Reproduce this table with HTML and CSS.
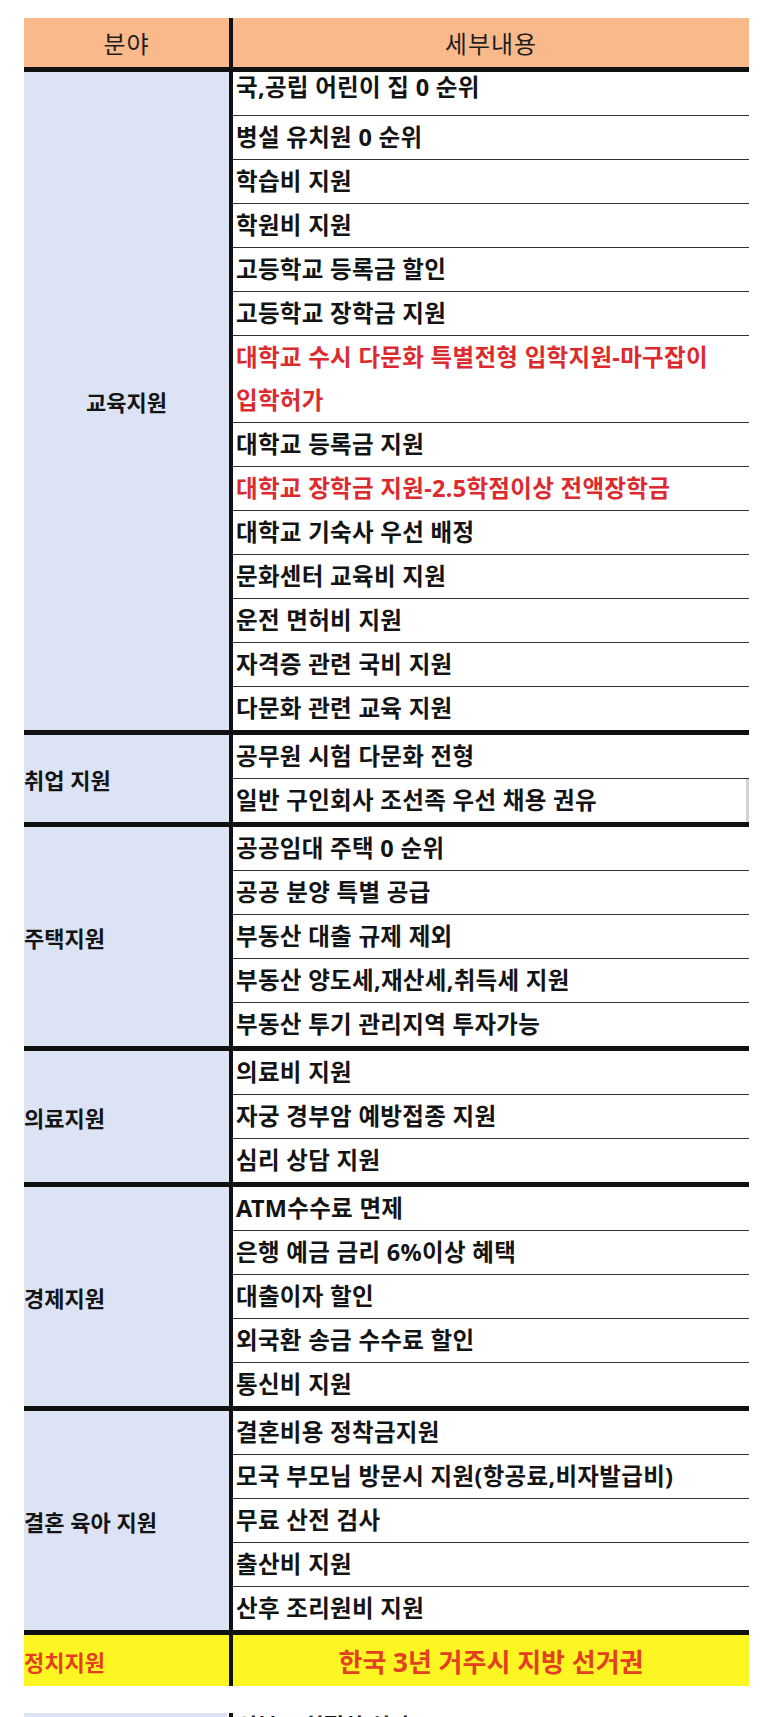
FILE: index.html
```html
<!DOCTYPE html>
<html lang="ko">
<head>
<meta charset="utf-8">
<title>지원 분야</title>
<link rel="stylesheet" href="styles.css">
</head>
<body>
<div class="table">
  <div class="head">
    <div class="hc1">분야</div>
    <div class="hc2">세부내용</div>
  </div>

  <div class="sec">
    <div class="cat center">교육지원</div>
    <div class="items">
      <div class="item top">국,공립 어린이 집 0 순위</div>
      <div class="item">병설 유치원 0 순위</div>
      <div class="item">학습비 지원</div>
      <div class="item">학원비 지원</div>
      <div class="item">고등학교 등록금 할인</div>
      <div class="item">고등학교 장학금 지원</div>
      <div class="item red">대학교 수시 다문화 특별전형 입학지원-마구잡이<br>입학허가</div>
      <div class="item">대학교 등록금 지원</div>
      <div class="item red">대학교 장학금 지원-2.5학점이상 전액장학금</div>
      <div class="item">대학교 기숙사 우선 배정</div>
      <div class="item">문화센터 교육비 지원</div>
      <div class="item">운전 면허비 지원</div>
      <div class="item">자격증 관련 국비 지원</div>
      <div class="item">다문화 관련 교육 지원</div>
    </div>
  </div>

  <div class="sec">
    <div class="cat">취업 지원</div>
    <div class="items">
      <div class="item">공무원 시험 다문화 전형</div>
      <div class="item edge">일반 구인회사 조선족 우선 채용 권유</div>
    </div>
  </div>

  <div class="sec">
    <div class="cat">주택지원</div>
    <div class="items">
      <div class="item">공공임대 주택 0 순위</div>
      <div class="item">공공 분양 특별 공급</div>
      <div class="item">부동산 대출 규제 제외</div>
      <div class="item">부동산 양도세,재산세,취득세 지원</div>
      <div class="item">부동산 투기 관리지역 투자가능</div>
    </div>
  </div>

  <div class="sec">
    <div class="cat">의료지원</div>
    <div class="items">
      <div class="item">의료비 지원</div>
      <div class="item">자궁 경부암 예방접종 지원</div>
      <div class="item">심리 상담 지원</div>
    </div>
  </div>

  <div class="sec">
    <div class="cat">경제지원</div>
    <div class="items">
      <div class="item">ATM수수료 면제</div>
      <div class="item">은행 예금 금리 6%이상 혜택</div>
      <div class="item">대출이자 할인</div>
      <div class="item">외국환 송금 수수료 할인</div>
      <div class="item">통신비 지원</div>
    </div>
  </div>

  <div class="sec">
    <div class="cat">결혼 육아 지원</div>
    <div class="items">
      <div class="item">결혼비용 정착금지원</div>
      <div class="item">모국 부모님 방문시 지원(항공료,비자발급비)</div>
      <div class="item">무료 산전 검사</div>
      <div class="item">출산비 지원</div>
      <div class="item">산후 조리원비 지원</div>
    </div>
  </div>

  <div class="pol">
    <div class="pcat">정치지원</div>
    <div class="pitem">한국 3년 거주시 지방 선거권</div>
  </div>
</div>

<div class="table frag">
  <div class="fsec">
    <div class="fcat"></div>
    <div class="fitem">신분 조회절차 심사</div>
  </div>
</div>
</body>
</html>
```

FILE: styles.css
```css
html, body {
  margin: 0;
  padding: 0;
  background: #ffffff;
}

body {
  font-family: "Noto Sans", "Noto Sans CJK KR", sans-serif;
  color: #141414;
  overflow: hidden;
}

.table {
  width: 725px;
  margin: 18px 0 0 24px;
}

.head {
  display: flex;
  height: 49px;
  background: #f9b98a;
  border-bottom: 5px solid #111;
}

.hc1,
.hc2 {
  display: flex;
  align-items: center;
  justify-content: center;
  font-size: 24px;
  font-weight: 400;
  letter-spacing: 1px;
  color: #1e1e1e;
}

.hc1 {
  width: 205px;
  flex: none;
}

.hc2 {
  flex: 1;
  border-left: 4px solid #111;
}

.sec {
  display: flex;
  border-bottom: 5px solid #111;
}

.cat {
  width: 205px;
  flex: none;
  background: #dce3f5;
  display: flex;
  align-items: center;
  font-size: 22px;
  font-weight: 700;
}

.cat.center {
  justify-content: center;
}

.items {
  flex: 1;
  border-left: 4px solid #111;
  background: #fff;
}

.item {
  line-height: 43px;
  font-size: 23.5px;
  font-weight: 700;
  letter-spacing: 0.3px;
  padding-left: 3px;
  white-space: nowrap;
}

.item + .item {
  border-top: 1px solid #333;
}

.item.top {
  line-height: 30px;
  padding-bottom: 13px;
}

.item.edge {
  box-shadow: inset -3px 0 0 #d4d4d4;
}

.red {
  color: #dc2a2e;
}

.pol {
  display: flex;
  height: 51px;
  background: #fdf622;
}

.pcat {
  width: 205px;
  flex: none;
  display: flex;
  align-items: center;
  font-size: 22px;
  font-weight: 700;
  color: #e43f20;
}

.pitem {
  flex: 1;
  border-left: 4px solid #111;
  display: flex;
  align-items: center;
  justify-content: center;
  font-size: 26px;
  font-weight: 700;
  color: #e43f20;
}

.frag {
  margin-top: 27px;
}

.fsec {
  display: flex;
  height: 40px;
}

.fcat {
  width: 203px;
  flex: none;
  background: #dce3f5;
}

.fitem {
  flex: 1;
  border-left: 4px solid #111;
  margin-left: 2px;
  padding-left: 4px;
  font-size: 22px;
  font-weight: 700;
  line-height: 24px;
}
```
